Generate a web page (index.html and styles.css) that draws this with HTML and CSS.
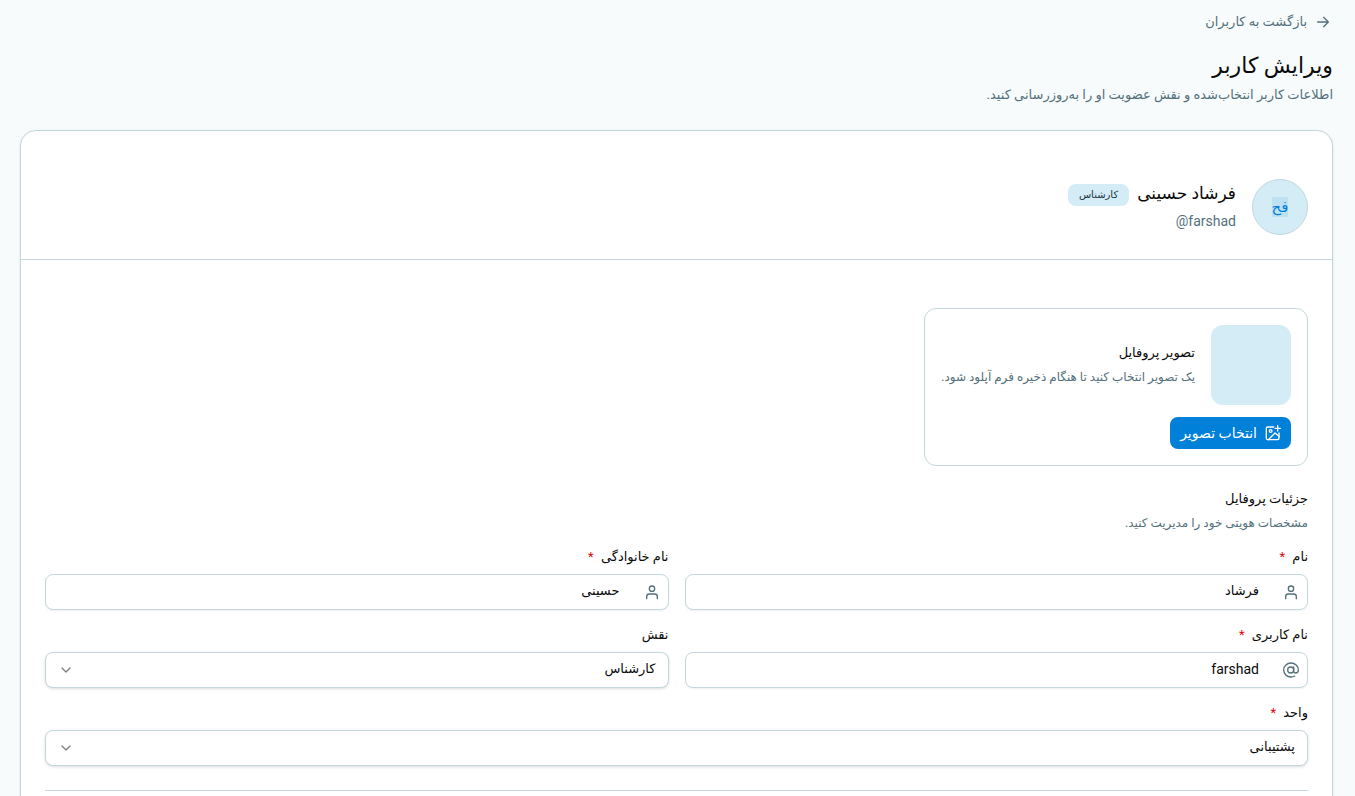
FILE: index.html
```html
<!DOCTYPE html>
<html lang="fa" dir="rtl">
<head>
<meta charset="utf-8">
<title>ویرایش کاربر</title>
<link rel="stylesheet" href="styles.css">
</head>
<body>
<main class="page">
  <header class="page-header">
    <a class="back-link" href="#users">
      <svg class="icon" viewBox="0 0 24 24" aria-hidden="true"><path d="M4 12h16M13 5l7 7-7 7"/></svg>
      <span>بازگشت به کاربران</span>
    </a>
    <h1 class="page-title">ویرایش کاربر</h1>
    <p class="page-subtitle">اطلاعات کاربر انتخاب‌شده و نقش عضویت او را به‌روزرسانی کنید.</p>
  </header>

  <section class="card">
    <div class="card-header">
      <div class="avatar"><span class="avatar-initials">فح</span></div>
      <div class="identity">
        <div class="identity-row">
          <h2 class="identity-name">فرشاد حسینی</h2>
          <span class="badge">کارشناس</span>
        </div>
        <p class="identity-handle"><bdi dir="ltr">@farshad</bdi></p>
      </div>
    </div>

    <form class="card-body">
      <div class="upload">
        <div class="upload-info">
          <div class="upload-preview"></div>
          <div class="upload-text">
            <h3 class="upload-title">تصویر پروفایل</h3>
            <p class="upload-hint">یک تصویر انتخاب کنید تا هنگام ذخیره فرم آپلود شود.</p>
          </div>
        </div>
        <button class="button" type="button">
          <svg class="icon" viewBox="0 0 24 24" aria-hidden="true"><path d="M13 3H4a2 2 0 0 0-2 2v15a2 2 0 0 0 2 2h15a2 2 0 0 0 2-2v-8M19 1v8M15 5h8"/><circle cx="8.500" cy="9" r="2"/><path d="M5 22L15 12l6 5"/></svg>
          <span>انتخاب تصویر</span>
        </button>
      </div>

      <div class="section-heading">
        <h3 class="section-title">جزئیات پروفایل</h3>
        <p class="section-hint">مشخصات هویتی خود را مدیریت کنید.</p>
      </div>

      <div class="fields">
        <div class="field">
          <label class="label" for="first-name">نام <span class="required">*</span></label>
          <div class="control">
            <svg class="icon control-icon" viewBox="0 0 24 24" aria-hidden="true"><circle cx="12" cy="7" r="4"/><path d="M4 22v-3a4 4 0 0 1 4-4h8a4 4 0 0 1 4 4v3"/></svg>
            <input class="input with-icon" id="first-name" type="text" value="فرشاد">
          </div>
        </div>
        <div class="field">
          <label class="label" for="last-name">نام خانوادگی <span class="required">*</span></label>
          <div class="control">
            <svg class="icon control-icon" viewBox="0 0 24 24" aria-hidden="true"><circle cx="12" cy="7" r="4"/><path d="M4 22v-3a4 4 0 0 1 4-4h8a4 4 0 0 1 4 4v3"/></svg>
            <input class="input with-icon" id="last-name" type="text" value="حسینی">
          </div>
        </div>
        <div class="field">
          <label class="label" for="username">نام کاربری <span class="required">*</span></label>
          <div class="control">
            <svg class="icon control-icon" viewBox="0 0 24 24" aria-hidden="true"><circle cx="11.500" cy="12" r="4.500"/><path d="M16 7.500v6a3 3 0 0 0 3 3c2.500 0 4-2 4-4.500C23 6 18 1.500 12 1.500S1 6 1 12s5 10.500 11 10.500c2 0 4-.5 5.500-1.500"/></svg>
            <input class="input with-icon latin" id="username" type="text" value="farshad">
          </div>
        </div>
        <div class="field">
          <label class="label" for="role">نقش</label>
          <div class="control">
            <select class="input select" id="role"><option>کارشناس</option></select>
            <svg class="icon chevron" viewBox="0 0 24 24" aria-hidden="true"><path d="M6 9l6 6 6-6"/></svg>
          </div>
        </div>
        <div class="field field-wide">
          <label class="label" for="unit">واحد <span class="required">*</span></label>
          <div class="control">
            <select class="input select" id="unit"><option>پشتیبانی</option></select>
            <svg class="icon chevron" viewBox="0 0 24 24" aria-hidden="true"><path d="M6 9l6 6 6-6"/></svg>
          </div>
        </div>
      </div>
      <hr class="divider">
    </form>
  </section>
</main>
</body>
</html>
```
FILE: styles.css
```css
* { box-sizing: border-box; }

body {
  margin: 0;
  background: #f7fbfc;
  color: #0a0a0a;
  font-family: Roboto, "DejaVu Sans", sans-serif;
  font-size: 13px;
  line-height: 20px;
  overflow-x: hidden;
}

h1, h2, h3, p { margin: 0; font-weight: 400; }

.page { padding: 10px 22px 32px 20px; }

.page-header { margin-bottom: 24px; }

.icon {
  flex: none;
  width: 16px;
  height: 16px;
  fill: none;
  stroke: currentColor;
  stroke-width: 2;
  stroke-linecap: round;
  stroke-linejoin: round;
}

.back-link {
  display: flex;
  align-items: center;
  gap: 8px;
  width: fit-content;
  height: 24px;
  padding-right: 2px;
  color: #54707b;
  text-decoration: none;
}

.page-title {
  margin-top: 14px;
  font-size: 22px;
  line-height: 36px;
}

.page-subtitle {
  color: #54707b;
  line-height: 22px;
}

.card {
  background: #fff;
  border: 1px solid #c4d7dd;
  border-radius: 16px;
  box-shadow: 0 1px 3px rgba(0, 0, 0, 0.1);
}

.card-header {
  display: flex;
  align-items: center;
  gap: 16px;
  padding: 48px 24px 24px;
  border-bottom: 1px solid #c4d7dd;
}

.avatar {
  display: grid;
  place-items: center;
  width: 56px;
  height: 56px;
  border: 1px solid #c4d7dd;
  border-radius: 50%;
  background: #d3ecf6;
  color: #0080d8;
  font-size: 15px;
}

.avatar-initials { background: #bee1f2; }

.identity-row {
  display: flex;
  align-items: center;
  gap: 8px;
}

.identity-name {
  padding-bottom: 4px;
  font-size: 17px;
  line-height: 24px;
}

.badge {
  padding: 0 11px;
  border-radius: 8px;
  background: #d3ecf6;
  color: #1b3540;
  font-size: 10px;
  line-height: 22px;
}

.identity-handle {
  color: #54707b;
  font-size: 14px;
  line-height: 24px;
}

.card-body { padding: 48px 24px 24px; }

.upload {
  width: fit-content;
  padding: 16px;
  border: 1px solid #c4d7dd;
  border-radius: 12px;
}

.upload-info {
  display: flex;
  align-items: center;
  gap: 16px;
  margin-bottom: 12px;
}

.upload-preview {
  width: 80px;
  height: 80px;
  border-radius: 12px;
  background: #d3ecf6;
}

.upload-title { font-size: 13px; line-height: 24px; }

.upload-hint,
.section-hint {
  color: #54707b;
  font-size: 12px;
  line-height: 24px;
}

.button {
  display: flex;
  align-items: center;
  gap: 8px;
  height: 32px;
  padding: 0 10px;
  border: 0;
  border-radius: 8px;
  background: #0080d8;
  color: #fff;
  font: inherit;
  font-size: 14px;
  cursor: pointer;
}

.section-heading { margin: 21px 0 13px; }

.section-title { font-size: 13px; line-height: 24px; }

.fields {
  display: grid;
  grid-template-columns: 1fr 1fr;
  gap: 16px;
}

.field-wide { grid-column: 1 / -1; }

.label {
  display: block;
  height: 26px;
  line-height: 18px;
}

.required { margin-right: 4px; color: #e7000b; }

.control { position: relative; }

.input {
  display: block;
  width: 100%;
  height: 36px;
  padding: 0 12px 3px;
  border: 1px solid #c4d7dd;
  border-radius: 8px;
  background: #fff;
  box-shadow: 0 1px 2px rgba(0, 0, 0, 0.06);
  color: #0a0a0a;
  font: inherit;
}

.with-icon { padding-right: 48px; }

.latin { font-size: 14px; }

.select {
  appearance: none;
  box-shadow: 0 1px 3px rgba(0, 0, 0, 0.14);
}

.control-icon {
  position: absolute;
  top: 10px;
  right: 9px;
  color: #54707b;
}

.chevron {
  position: absolute;
  top: 10px;
  left: 13px;
  color: #7c8184;
}

.divider {
  margin: 24px 0 0;
  border: 0;
  border-top: 1px solid #c4d7dd;
}
```
